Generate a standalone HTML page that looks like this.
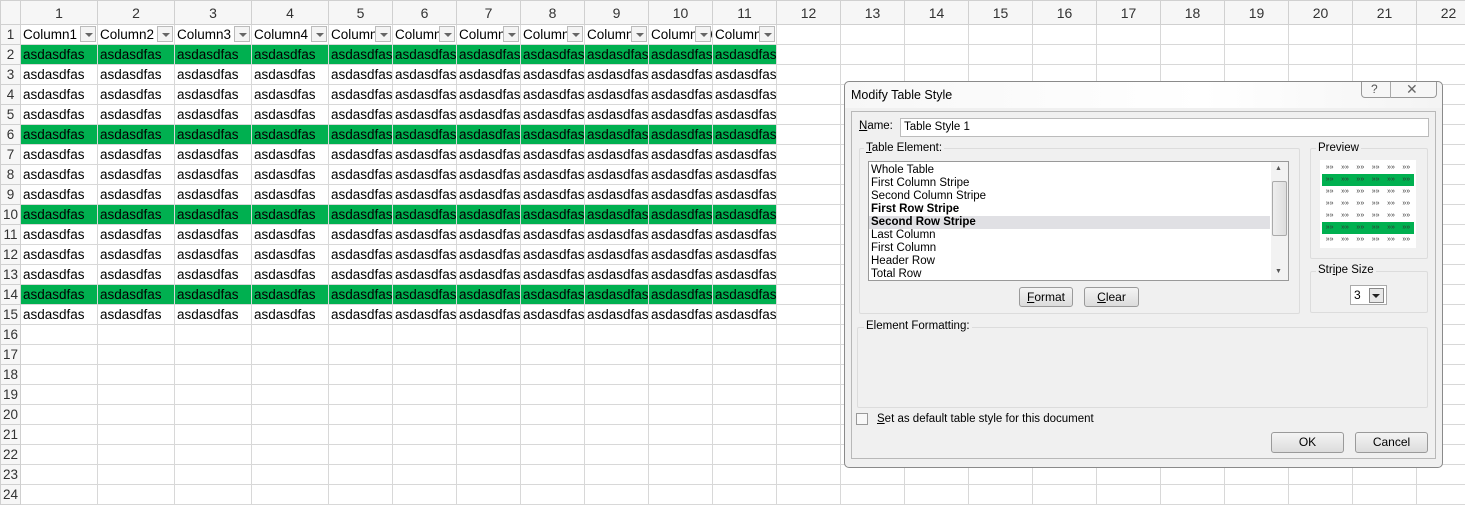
<!DOCTYPE html>
<html><head><meta charset="utf-8"><style>
*{box-sizing:border-box;margin:0;padding:0}
body{width:1465px;height:511px;overflow:hidden;background:#fff;font-family:"Liberation Sans",sans-serif;position:relative}
table{border-collapse:collapse;table-layout:fixed;position:absolute;left:0;top:0;width:1480px}
td{height:20px;border:1px solid #d8d8d8;font-size:13.5px;color:#000;white-space:nowrap;overflow:hidden;padding:0 2px;line-height:18px}
tr.h td{height:24px;background:#f6f6f6;color:#333;text-align:center;font-size:14px;border-color:#d0d0d0}
td.rn{background:#f6f6f6;color:#333;text-align:center;padding:0;border-color:#d0d0d0}
tr.g td.c{background:#00b050}
td.hd{position:relative}
.dd{position:absolute;right:1px;top:1px;width:16px;height:16px;border:1px solid #bbb;background:#f4f4f4}
.dd:after{content:"";position:absolute;left:4px;top:6px;border-left:4px solid transparent;border-right:4px solid transparent;border-top:4px solid #666}
.dlg{position:absolute;left:844px;top:81px;width:599px;height:387px;background:#f0f0f0;border:1px solid #8a8a8a;border-radius:5px;font-size:12px;color:#000}
.ab{position:absolute}
.grp{position:absolute;border:1px solid #dcdcdc;border-radius:2px}
.lbl{position:absolute;background:#f0f0f0;padding:0 2px;font-size:11.5px}
.btn{position:absolute;border:1px solid #9a9a9a;border-radius:3px;background:linear-gradient(#f4f4f4,#dcdcdc);text-align:center;font-size:12px;line-height:18px}
.li{height:13px;line-height:13px;font-size:11.5px;padding-left:2px}
.pv{position:absolute;left:1322px;width:92px;height:12px;font-size:7px;line-height:12px;letter-spacing:0;color:#333;display:flex;justify-content:space-around}
</style></head><body>
<table>
<colgroup><col style="width:20px"><col style="width:77px"><col style="width:77px"><col style="width:77px"><col style="width:77px"><col style="width:64px"><col style="width:64px"><col style="width:64px"><col style="width:64px"><col style="width:64px"><col style="width:64px"><col style="width:64px"><col style="width:64px"><col style="width:64px"><col style="width:64px"><col style="width:64px"><col style="width:64px"><col style="width:64px"><col style="width:64px"><col style="width:64px"><col style="width:64px"><col style="width:64px"><col style="width:64px"></colgroup>
<tr class="h"><td></td><td>1</td><td>2</td><td>3</td><td>4</td><td>5</td><td>6</td><td>7</td><td>8</td><td>9</td><td>10</td><td>11</td><td>12</td><td>13</td><td>14</td><td>15</td><td>16</td><td>17</td><td>18</td><td>19</td><td>20</td><td>21</td><td>22</td></tr>
<tr><td class="rn">1</td><td class="hd">Column1<span class="dd"></span></td><td class="hd">Column2<span class="dd"></span></td><td class="hd">Column3<span class="dd"></span></td><td class="hd">Column4<span class="dd"></span></td><td class="hd">Column5<span class="dd"></span></td><td class="hd">Column6<span class="dd"></span></td><td class="hd">Column7<span class="dd"></span></td><td class="hd">Column8<span class="dd"></span></td><td class="hd">Column9<span class="dd"></span></td><td class="hd">Column10<span class="dd"></span></td><td class="hd">Column11<span class="dd"></span></td><td></td><td></td><td></td><td></td><td></td><td></td><td></td><td></td><td></td><td></td><td></td></tr>
<tr class="g"><td class="rn">2</td><td class="c">asdasdfas</td><td class="c">asdasdfas</td><td class="c">asdasdfas</td><td class="c">asdasdfas</td><td class="c">asdasdfas</td><td class="c">asdasdfas</td><td class="c">asdasdfas</td><td class="c">asdasdfas</td><td class="c">asdasdfas</td><td class="c">asdasdfas</td><td class="c">asdasdfas</td><td></td><td></td><td></td><td></td><td></td><td></td><td></td><td></td><td></td><td></td><td></td></tr>
<tr><td class="rn">3</td><td>asdasdfas</td><td>asdasdfas</td><td>asdasdfas</td><td>asdasdfas</td><td>asdasdfas</td><td>asdasdfas</td><td>asdasdfas</td><td>asdasdfas</td><td>asdasdfas</td><td>asdasdfas</td><td>asdasdfas</td><td></td><td></td><td></td><td></td><td></td><td></td><td></td><td></td><td></td><td></td><td></td></tr>
<tr><td class="rn">4</td><td>asdasdfas</td><td>asdasdfas</td><td>asdasdfas</td><td>asdasdfas</td><td>asdasdfas</td><td>asdasdfas</td><td>asdasdfas</td><td>asdasdfas</td><td>asdasdfas</td><td>asdasdfas</td><td>asdasdfas</td><td></td><td></td><td></td><td></td><td></td><td></td><td></td><td></td><td></td><td></td><td></td></tr>
<tr><td class="rn">5</td><td>asdasdfas</td><td>asdasdfas</td><td>asdasdfas</td><td>asdasdfas</td><td>asdasdfas</td><td>asdasdfas</td><td>asdasdfas</td><td>asdasdfas</td><td>asdasdfas</td><td>asdasdfas</td><td>asdasdfas</td><td></td><td></td><td></td><td></td><td></td><td></td><td></td><td></td><td></td><td></td><td></td></tr>
<tr class="g"><td class="rn">6</td><td class="c">asdasdfas</td><td class="c">asdasdfas</td><td class="c">asdasdfas</td><td class="c">asdasdfas</td><td class="c">asdasdfas</td><td class="c">asdasdfas</td><td class="c">asdasdfas</td><td class="c">asdasdfas</td><td class="c">asdasdfas</td><td class="c">asdasdfas</td><td class="c">asdasdfas</td><td></td><td></td><td></td><td></td><td></td><td></td><td></td><td></td><td></td><td></td><td></td></tr>
<tr><td class="rn">7</td><td>asdasdfas</td><td>asdasdfas</td><td>asdasdfas</td><td>asdasdfas</td><td>asdasdfas</td><td>asdasdfas</td><td>asdasdfas</td><td>asdasdfas</td><td>asdasdfas</td><td>asdasdfas</td><td>asdasdfas</td><td></td><td></td><td></td><td></td><td></td><td></td><td></td><td></td><td></td><td></td><td></td></tr>
<tr><td class="rn">8</td><td>asdasdfas</td><td>asdasdfas</td><td>asdasdfas</td><td>asdasdfas</td><td>asdasdfas</td><td>asdasdfas</td><td>asdasdfas</td><td>asdasdfas</td><td>asdasdfas</td><td>asdasdfas</td><td>asdasdfas</td><td></td><td></td><td></td><td></td><td></td><td></td><td></td><td></td><td></td><td></td><td></td></tr>
<tr><td class="rn">9</td><td>asdasdfas</td><td>asdasdfas</td><td>asdasdfas</td><td>asdasdfas</td><td>asdasdfas</td><td>asdasdfas</td><td>asdasdfas</td><td>asdasdfas</td><td>asdasdfas</td><td>asdasdfas</td><td>asdasdfas</td><td></td><td></td><td></td><td></td><td></td><td></td><td></td><td></td><td></td><td></td><td></td></tr>
<tr class="g"><td class="rn">10</td><td class="c">asdasdfas</td><td class="c">asdasdfas</td><td class="c">asdasdfas</td><td class="c">asdasdfas</td><td class="c">asdasdfas</td><td class="c">asdasdfas</td><td class="c">asdasdfas</td><td class="c">asdasdfas</td><td class="c">asdasdfas</td><td class="c">asdasdfas</td><td class="c">asdasdfas</td><td></td><td></td><td></td><td></td><td></td><td></td><td></td><td></td><td></td><td></td><td></td></tr>
<tr><td class="rn">11</td><td>asdasdfas</td><td>asdasdfas</td><td>asdasdfas</td><td>asdasdfas</td><td>asdasdfas</td><td>asdasdfas</td><td>asdasdfas</td><td>asdasdfas</td><td>asdasdfas</td><td>asdasdfas</td><td>asdasdfas</td><td></td><td></td><td></td><td></td><td></td><td></td><td></td><td></td><td></td><td></td><td></td></tr>
<tr><td class="rn">12</td><td>asdasdfas</td><td>asdasdfas</td><td>asdasdfas</td><td>asdasdfas</td><td>asdasdfas</td><td>asdasdfas</td><td>asdasdfas</td><td>asdasdfas</td><td>asdasdfas</td><td>asdasdfas</td><td>asdasdfas</td><td></td><td></td><td></td><td></td><td></td><td></td><td></td><td></td><td></td><td></td><td></td></tr>
<tr><td class="rn">13</td><td>asdasdfas</td><td>asdasdfas</td><td>asdasdfas</td><td>asdasdfas</td><td>asdasdfas</td><td>asdasdfas</td><td>asdasdfas</td><td>asdasdfas</td><td>asdasdfas</td><td>asdasdfas</td><td>asdasdfas</td><td></td><td></td><td></td><td></td><td></td><td></td><td></td><td></td><td></td><td></td><td></td></tr>
<tr class="g"><td class="rn">14</td><td class="c">asdasdfas</td><td class="c">asdasdfas</td><td class="c">asdasdfas</td><td class="c">asdasdfas</td><td class="c">asdasdfas</td><td class="c">asdasdfas</td><td class="c">asdasdfas</td><td class="c">asdasdfas</td><td class="c">asdasdfas</td><td class="c">asdasdfas</td><td class="c">asdasdfas</td><td></td><td></td><td></td><td></td><td></td><td></td><td></td><td></td><td></td><td></td><td></td></tr>
<tr><td class="rn">15</td><td>asdasdfas</td><td>asdasdfas</td><td>asdasdfas</td><td>asdasdfas</td><td>asdasdfas</td><td>asdasdfas</td><td>asdasdfas</td><td>asdasdfas</td><td>asdasdfas</td><td>asdasdfas</td><td>asdasdfas</td><td></td><td></td><td></td><td></td><td></td><td></td><td></td><td></td><td></td><td></td><td></td></tr>
<tr><td class="rn">16</td><td></td><td></td><td></td><td></td><td></td><td></td><td></td><td></td><td></td><td></td><td></td><td></td><td></td><td></td><td></td><td></td><td></td><td></td><td></td><td></td><td></td><td></td></tr>
<tr><td class="rn">17</td><td></td><td></td><td></td><td></td><td></td><td></td><td></td><td></td><td></td><td></td><td></td><td></td><td></td><td></td><td></td><td></td><td></td><td></td><td></td><td></td><td></td><td></td></tr>
<tr><td class="rn">18</td><td></td><td></td><td></td><td></td><td></td><td></td><td></td><td></td><td></td><td></td><td></td><td></td><td></td><td></td><td></td><td></td><td></td><td></td><td></td><td></td><td></td><td></td></tr>
<tr><td class="rn">19</td><td></td><td></td><td></td><td></td><td></td><td></td><td></td><td></td><td></td><td></td><td></td><td></td><td></td><td></td><td></td><td></td><td></td><td></td><td></td><td></td><td></td><td></td></tr>
<tr><td class="rn">20</td><td></td><td></td><td></td><td></td><td></td><td></td><td></td><td></td><td></td><td></td><td></td><td></td><td></td><td></td><td></td><td></td><td></td><td></td><td></td><td></td><td></td><td></td></tr>
<tr><td class="rn">21</td><td></td><td></td><td></td><td></td><td></td><td></td><td></td><td></td><td></td><td></td><td></td><td></td><td></td><td></td><td></td><td></td><td></td><td></td><td></td><td></td><td></td><td></td></tr>
<tr><td class="rn">22</td><td></td><td></td><td></td><td></td><td></td><td></td><td></td><td></td><td></td><td></td><td></td><td></td><td></td><td></td><td></td><td></td><td></td><td></td><td></td><td></td><td></td><td></td></tr>
<tr><td class="rn">23</td><td></td><td></td><td></td><td></td><td></td><td></td><td></td><td></td><td></td><td></td><td></td><td></td><td></td><td></td><td></td><td></td><td></td><td></td><td></td><td></td><td></td><td></td></tr>
<tr><td class="rn">24</td><td></td><td></td><td></td><td></td><td></td><td></td><td></td><td></td><td></td><td></td><td></td><td></td><td></td><td></td><td></td><td></td><td></td><td></td><td></td><td></td><td></td><td></td></tr>
</table>

<div class="dlg"></div>
<div class="ab" style="left:845px;top:82px;width:597px;height:26px;background:linear-gradient(90deg,#f7f7f7,#fff 60%,#f4f4f4);border-radius:5px 5px 0 0"></div>
<div class="ab" style="left:851px;top:88px;font-size:12.5px">Modify Table Style</div>
<div class="ab" style="left:1361px;top:82px;width:76px;height:16px;border:1px solid #999;border-top:none;border-radius:0 0 4px 4px;background:#f6f6f6"></div>
<div class="ab" style="left:1390px;top:82px;width:1px;height:16px;background:#aaa"></div>
<div class="ab" style="left:1371px;top:82px;font-size:12px;color:#555">?</div>
<div class="ab" style="left:1406px;top:81px;font-size:14px;color:#666">✕</div>
<div class="ab" style="left:851px;top:111px;width:585px;height:348px;border:1px solid #b8b8b8;background:#f0f0f0"></div>

<div class="ab" style="left:859px;top:120px;font-size:11.5px"><u>N</u>ame:</div>
<div class="ab" style="left:900px;top:118px;width:529px;height:19px;border:1px solid #bbb;background:#fff;font-size:11.5px;line-height:17px;padding-left:3px">Table Style 1</div>

<div class="grp" style="left:859px;top:148px;width:441px;height:166px"></div>
<div class="lbl" style="left:864px;top:142px"><u>T</u>able Element:</div>
<div class="ab" style="left:868px;top:161px;width:421px;height:120px;border:1px solid #999;background:#fff;padding-top:2px">
<div class="li">Whole Table</div><div class="li">First Column Stripe</div><div class="li">Second Column Stripe</div><div class="li" style="font-weight:bold">First Row Stripe</div><div class="li" style="font-weight:bold;background:#e0e0e4;width:401px">Second Row Stripe</div><div class="li">Last Column</div><div class="li">First Column</div><div class="li">Header Row</div><div class="li">Total Row</div>
</div>
<div class="ab" style="left:1271px;top:162px;width:17px;height:118px;background:#f2f2f2"></div>
<div class="ab" style="left:1275px;top:165px;font-size:7px;color:#555">▲</div>
<div class="ab" style="left:1275px;top:268px;font-size:7px;color:#555">▼</div>
<div class="ab" style="left:1272px;top:181px;width:15px;height:55px;border:1px solid #aaa;background:linear-gradient(90deg,#eee,#ddd);border-radius:2px"></div>
<div class="btn" style="left:1019px;top:287px;width:54px;height:20px"><u>F</u>ormat</div>
<div class="btn" style="left:1084px;top:287px;width:55px;height:20px"><u>C</u>lear</div>

<div class="grp" style="left:1310px;top:148px;width:118px;height:111px"></div>
<div class="lbl" style="left:1316px;top:142px">Preview</div>
<div class="ab" style="left:1320px;top:160px;width:96px;height:88px;background:#fff"></div>
<div class="pv" style="top:162px"><span>»»</span><span>»»</span><span>»»</span><span>»»</span><span>»»</span><span>»»</span></div>
<div class="pv" style="top:174px;background:#00b050"><span>»»</span><span>»»</span><span>»»</span><span>»»</span><span>»»</span><span>»»</span></div>
<div class="pv" style="top:186px"><span>»»</span><span>»»</span><span>»»</span><span>»»</span><span>»»</span><span>»»</span></div>
<div class="pv" style="top:198px"><span>»»</span><span>»»</span><span>»»</span><span>»»</span><span>»»</span><span>»»</span></div>
<div class="pv" style="top:210px"><span>»»</span><span>»»</span><span>»»</span><span>»»</span><span>»»</span><span>»»</span></div>
<div class="pv" style="top:222px;background:#00b050"><span>»»</span><span>»»</span><span>»»</span><span>»»</span><span>»»</span><span>»»</span></div>
<div class="pv" style="top:234px"><span>»»</span><span>»»</span><span>»»</span><span>»»</span><span>»»</span><span>»»</span></div>

<div class="grp" style="left:1310px;top:271px;width:118px;height:42px"></div>
<div class="lbl" style="left:1316px;top:264px">Str<u>i</u>pe Size</div>
<div class="ab" style="left:1350px;top:285px;width:37px;height:20px;border:1px solid #aaa;background:#fff;font-size:12px;line-height:18px;padding-left:3px">3</div>
<div class="ab" style="left:1369px;top:288px;width:15px;height:15px;border:1px solid #888;background:#e8e8e8"></div>
<div class="ab" style="left:1372px;top:294px;border-left:4px solid transparent;border-right:4px solid transparent;border-top:4px solid #222"></div>

<div class="grp" style="left:857px;top:327px;width:571px;height:81px"></div>
<div class="lbl" style="left:864px;top:320px">Element Formatting:</div>

<div class="ab" style="left:856px;top:413px;width:12px;height:12px;border:1px solid #999;background:#f8f8f8"></div>
<div class="ab" style="left:877px;top:413px;font-size:11.5px"><u>S</u>et as default table style for this document</div>
<div class="btn" style="left:1271px;top:432px;width:73px;height:21px">OK</div>
<div class="btn" style="left:1355px;top:432px;width:73px;height:21px">Cancel</div>
</body></html>
